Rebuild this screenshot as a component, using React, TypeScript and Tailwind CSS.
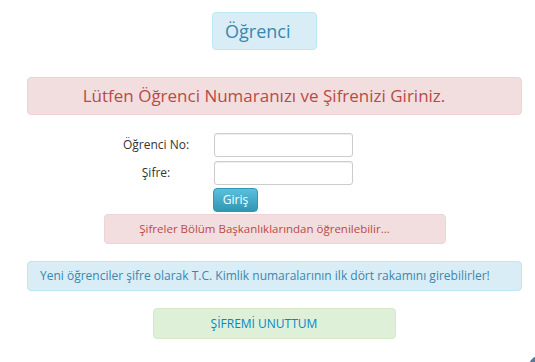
import React from "react";

export default function App() {
  return (
    <div
      className="relative w-[535px] h-[362px] bg-white overflow-hidden"
      style={{ fontFamily: '"Open Sans", "Noto Sans", sans-serif' }}
    >
      <div className="ml-[27px] w-[495px] pt-[12px] flex flex-col">
        <div className="flex">
          <div className="ml-[185px] w-[105px] h-[38px] rounded-[4px] border border-[#bce8f1] bg-[#d9edf7] text-[#3a87ad] text-[18px] flex items-center pl-[12px]">
            Öğrenci
          </div>
        </div>
        <div className="mt-[27px] h-[38px] rounded-[4px] border border-[#eed3d7] bg-[#f2dede] text-[#b94a48] text-[17px] flex items-center justify-center pl-[14px] pr-[35px]">
          Lütfen Öğrenci Numaranızı ve Şifrenizi Giriniz.
        </div>
        <div className="mt-[18px] flex flex-col gap-[4px] text-[12px] text-[#333]">
          <div className="flex items-center">
            <div className="w-[112px] ml-[73px] text-center whitespace-nowrap">Öğrenci No:</div>
            <input className="ml-[2px] w-[139px] h-[24px] rounded-[3px] border border-[#ccc] bg-white shadow-[inset_0_1px_1px_rgba(0,0,0,0.075)]" />
          </div>
          <div className="flex items-center">
            <div className="w-[112px] ml-[73px] text-center whitespace-nowrap">Şifre:</div>
            <input type="password" className="ml-[2px] w-[139px] h-[24px] rounded-[3px] border border-[#ccc] bg-white shadow-[inset_0_1px_1px_rgba(0,0,0,0.075)]" />
          </div>
        </div>
        <div className="mt-[3px] ml-[186px] flex">
          <button className="w-[45px] h-[24px] rounded-[4px] border border-[#2f96b4] bg-gradient-to-b from-[#5bc0de] to-[#2f96b4] text-white text-[12px] leading-none">
            Giriş
          </button>
        </div>
        <div className="mt-[2px] ml-[77px] w-[342px] h-[30px] rounded-[4px] border border-[#eed3d7] bg-[#f2dede] text-[#b94a48] text-[11.5px] flex items-center justify-center pl-[14px] pr-[35px] whitespace-nowrap">
          Şifreler Bölüm Başkanlıklarından öğrenilebilir...
        </div>
        <div className="mt-[17px] h-[30px] rounded-[4px] border border-[#bce8f1] bg-[#d9edf7] text-[#3a87ad] text-[12px] flex items-center pl-[12px] whitespace-nowrap">
          Yeni öğrenciler şifre olarak T.C. Kimlik numaralarının ilk dört rakamını girebilirler!
        </div>
        <div className="mt-[17px] ml-[126px] w-[243px] h-[31px] rounded-[4px] border border-[#d6e9c6] bg-[#dff0d8] text-[#0088cc] text-[12px] flex items-center justify-center pl-[14px] pr-[35px]">
          ŞİFREMİ UNUTTUM
        </div>
      </div>
      <div className="absolute right-[-14px] bottom-[-14px] w-[20px] h-[20px] rounded-full bg-[#5a7a9a]" />
    </div>
  );
}
